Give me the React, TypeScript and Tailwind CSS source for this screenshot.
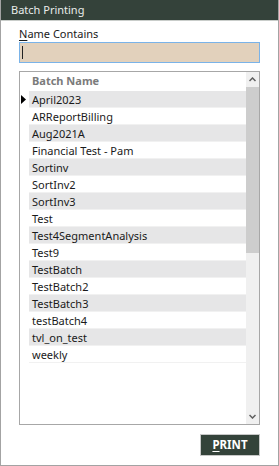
const batches = [
  "April2023",
  "ARReportBilling",
  "Aug2021A",
  "Financial Test - Pam",
  "Sortinv",
  "SortInv2",
  "SortInv3",
  "Test",
  "Test4SegmentAnalysis",
  "Test9",
  "TestBatch",
  "TestBatch2",
  "TestBatch3",
  "testBatch4",
  "tvl_on_test",
  "weekly",
];

const font = { fontFamily: '"Noto Sans", "Open Sans", sans-serif' };

export default function App() {
  return (
    <div
      className="flex h-[466px] w-[279px] flex-col border-x border-b border-[#a3a3a3] bg-white text-[11px] text-[#1a1a1a]"
      style={font}
    >
      {/* title bar */}
      <div className="flex h-[20px] shrink-0 items-center bg-[#34423a] pl-[10px] text-[11px] text-[#e9ecea]">
        Batch Printing
      </div>
      <div className="h-px bg-[#c9cdca]" />

      <div className="flex flex-1 flex-col px-[18px]">
        <label className="mt-[6px] h-[14px] text-[11px] leading-[14px]">
          <span className="underline underline-offset-2">N</span>ame Contains
        </label>
        <div className="mt-px flex h-[21px] items-center border border-[#7ab3e8] bg-[#e2d1bc] pl-[2px]">
          <span className="h-[13px] w-px bg-[#222]" />
        </div>

        {/* grid */}
        <div className="mt-[8px] flex h-[354px] border border-[#a7a7a7]">
          <div className="w-[9px] shrink-0">
            <div className="h-[19px]" />
            <div className="flex h-[17px] items-center pl-[1px]">
              <svg width="5" height="9" viewBox="0 0 5 9">
                <path d="M0 0 L5 4.5 L0 9 Z" fill="#000" />
              </svg>
            </div>
          </div>
          <div className="flex-1">
            <div className="flex h-[19px] items-center pl-[3px] font-bold text-[#7b7b7b]">
              Batch Name
            </div>
            {batches.map((b, i) => (
              <div
                key={b}
                className={`flex h-[17px] items-center border-b border-[#f1f1f1] pl-[3px] leading-none ${
                  i % 2 === 0 ? "bg-[#e6e6e7]" : "bg-white"
                }`}
              >
                {b}
              </div>
            ))}
          </div>
          {/* scrollbar */}
          <div className="flex w-[13px] shrink-0 flex-col bg-[#f0f0f0]">
            <div className="flex h-[15px] items-center justify-center">
              <svg width="7" height="5" viewBox="0 0 7 5">
                <path d="M0.5 4 L3.5 1 L6.5 4" fill="none" stroke="#606060" strokeWidth="1.5" />
              </svg>
            </div>
            <div className="h-[166px] bg-[#cdcdcd]" />
            <div className="flex-1" />
            <div className="flex h-[15px] items-center justify-center">
              <svg width="7" height="5" viewBox="0 0 7 5">
                <path d="M0.5 1 L3.5 4 L6.5 1" fill="none" stroke="#606060" strokeWidth="1.5" />
              </svg>
            </div>
          </div>
        </div>

        <div className="mt-[9px] flex justify-end">
          <button className="flex h-[22px] w-[60px] items-center justify-center border border-[#c8c8c8] bg-[#34433a] text-[11.5px] font-bold text-white">
            <span className="underline underline-offset-2">P</span>RINT
          </button>
        </div>
      </div>
    </div>
  );
}
